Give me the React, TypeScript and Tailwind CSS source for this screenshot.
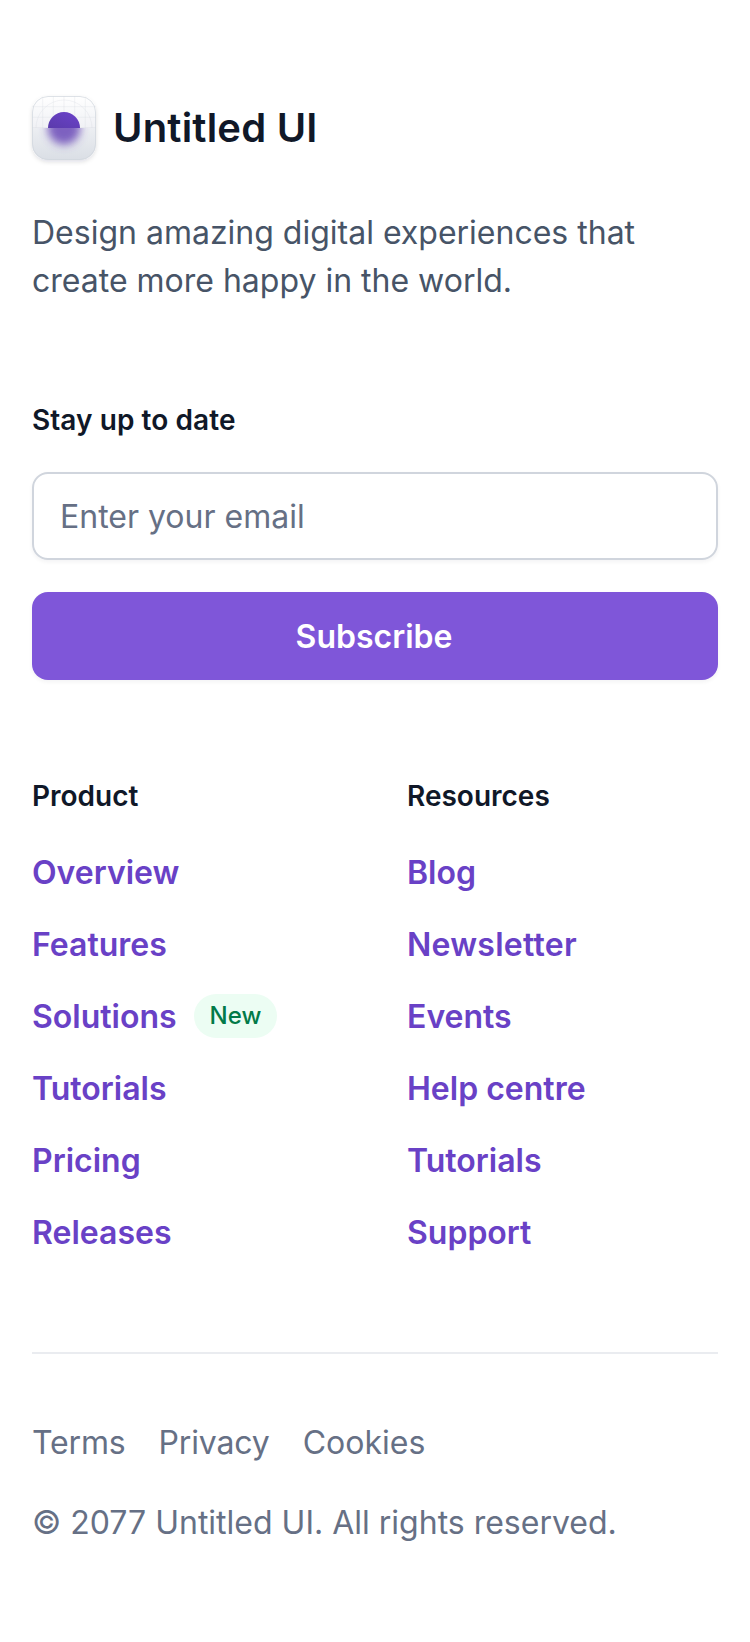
import React from "react";

const product = ["Overview", "Features", "Solutions", "Tutorials", "Pricing", "Releases"];
const resources = ["Blog", "Newsletter", "Events", "Help centre", "Tutorials", "Support"];

function Logo() {
  return (
    <svg width="64" height="64" viewBox="0 0 64 64" className="shrink-0 overflow-visible">
      <defs>
        <linearGradient id="face" x1="0" y1="0" x2="0" y2="1">
          <stop offset="0" stopColor="#fff" />
          <stop offset="0.5" stopColor="#F0F1F5" />
          <stop offset="0.5" stopColor="#ECEEF2" />
          <stop offset="1" stopColor="#DADEE5" />
        </linearGradient>
        <linearGradient id="dot" x1="0.3" y1="1" x2="0.7" y2="0">
          <stop offset="0" stopColor="#53389E" />
          <stop offset="1" stopColor="#6941C6" />
        </linearGradient>
        <clipPath id="top"><rect width="64" height="32" /></clipPath>
        <clipPath id="bottom"><path d="M0 32h64v16a16 16 0 0 1-16 16H16A16 16 0 0 1 0 48Z" /></clipPath>
        <filter id="soft" x="-50%" y="-50%" width="200%" height="200%"><feGaussianBlur stdDeviation="4" /></filter>
        <filter id="drop" x="-20%" y="-20%" width="140%" height="150%"><feDropShadow dx="0" dy="2" stdDeviation="2" floodColor="#101828" floodOpacity="0.12" /></filter>
      </defs>
      <rect width="64" height="64" rx="16" fill="url(#face)" filter="url(#drop)" />
      <g clipPath="url(#top)" fill="none" stroke="#D0D5DD" strokeOpacity="0.26" strokeWidth="1">
        <path d="M10.7 2V32M21.3 0V32M32 0V32M42.7 0V32M53.3 2V32M0 10.7H64M0 21.3H64M0 31.5H64" />
        <circle cx="32" cy="32" r="28" />
      </g>
      <rect x="0.5" y="0.5" width="63" height="63" rx="15.5" fill="none" stroke="#D0D5DD" strokeOpacity="0.7" />
      <circle cx="32" cy="32" r="16" fill="url(#dot)" clipPath="url(#top)" />
      <g clipPath="url(#bottom)"><circle cx="32" cy="32" r="16.5" fill="#6240B4" fillOpacity="0.8" filter="url(#soft)" /></g>
    </svg>
  );
}

function LinkColumn({ title, links }: { title: string; links: string[] }) {
  return (
    <nav className="flex flex-col">
      <h3 className="text-[28px] leading-[40px] font-semibold text-[#101828]">{title}</h3>
      <ul className="mt-8 flex flex-col gap-6 text-[32px] leading-[48px] font-semibold text-[#6941C6]">
        {links.map((link) => (
          <li key={link} className="flex h-12 items-center gap-[17px]">
            <a href="#" className={link === "Newsletter" ? "pt-0.5 tracking-[0.25px]" : "pt-0.5"}>{link}</a>
            {link === "Solutions" && (
              <span className="rounded-full bg-[#ECFDF3] px-4 py-1 text-[24px] leading-[36px] font-medium text-[#027A48]">New</span>
            )}
          </li>
        ))}
      </ul>
    </nav>
  );
}

export default function App() {
  return (
    <footer className="min-h-[1642px] bg-white px-8 pt-24 font-['Inter',sans-serif]">
      <div className="flex items-center gap-[17px]">
        <Logo />
        <span className="text-[40px] leading-[64px] font-semibold tracking-[0.2px] text-[#101828]">Untitled UI</span>
      </div>
      <p className="mt-[49px] text-[32px] leading-[48px] text-[#475467]">
        Design amazing digital experiences that create more happy in the world.
      </p>
      <form className="mt-[95px] flex flex-col">
        <label htmlFor="email" className="text-[28px] leading-[40px] font-semibold tracking-[0.07px] text-[#101828]">Stay up to date</label>
        <input id="email" type="email" placeholder="Enter your email" className="mt-8 h-[88px] rounded-2xl border-2 border-[#D0D5DD] px-[26px] text-[32px] text-[#101828] shadow-[0_2px_4px_rgba(16,24,40,0.05)] placeholder:text-[#667085]" />
        <button type="button" className="mt-8 h-[88px] rounded-2xl bg-[#7F56D9] pt-0.5 pr-0.5 text-[32px] font-semibold text-white shadow-[0_2px_4px_rgba(16,24,40,0.05)]">Subscribe</button>
      </form>
      <div className="mt-24 grid grid-cols-2 gap-16">
        <LinkColumn title="Product" links={product} />
        <LinkColumn title="Resources" links={resources} />
      </div>
      <div className="mt-24 border-t-2 border-[#EAECF0] pt-[65px] text-[32px] leading-[48px] text-[#667085]">
        <div className="flex gap-[33px]">
          <a href="#" className="tracking-[-0.15px]">Terms</a>
          <a href="#" className="tracking-[-0.15px]">Privacy</a>
          <a href="#">Cookies</a>
        </div>
        <p className="mt-8">© 2077 Untitled UI. All rights reserved.</p>
      </div>
    </footer>
  );
}
